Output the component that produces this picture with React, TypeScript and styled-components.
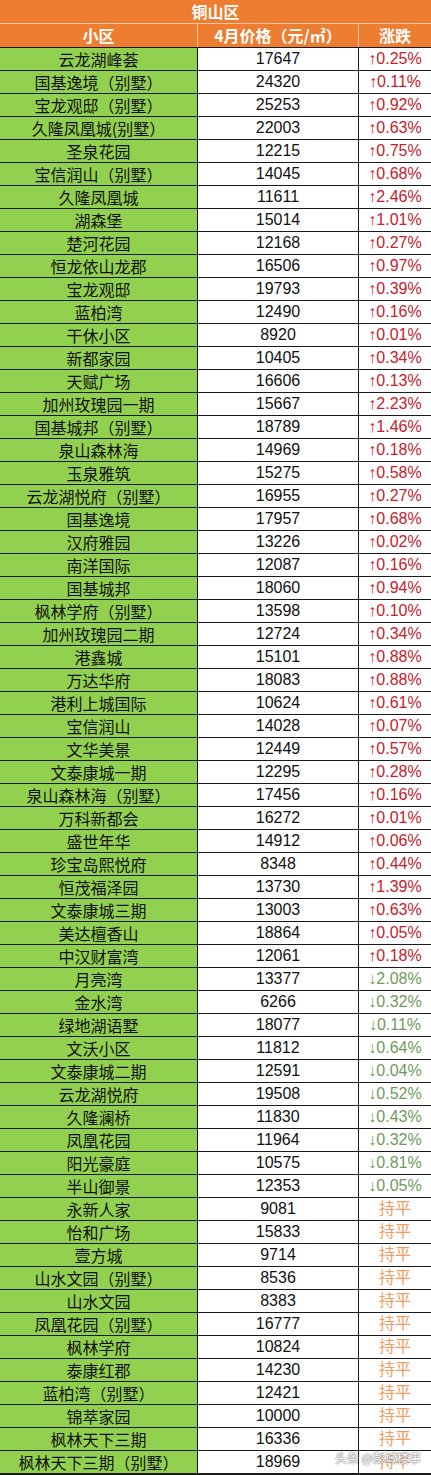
import React from 'react'
import styled, { createGlobalStyle } from 'styled-components'

type Trend = 'up' | 'down' | 'flat'

interface Row {
  name: string
  price: string
  change: string
}

const rows: Row[] = [
  { name: '云龙湖峰荟', price: '17647', change: '↑0.25%' },
  { name: '国基逸境（别墅）', price: '24320', change: '↑0.11%' },
  { name: '宝龙观邸（别墅）', price: '25253', change: '↑0.92%' },
  { name: '久隆凤凰城(别墅）', price: '22003', change: '↑0.63%' },
  { name: '圣泉花园', price: '12215', change: '↑0.75%' },
  { name: '宝信润山（别墅）', price: '14045', change: '↑0.68%' },
  { name: '久隆凤凰城', price: '11611', change: '↑2.46%' },
  { name: '湖森堡', price: '15014', change: '↑1.01%' },
  { name: '楚河花园', price: '12168', change: '↑0.27%' },
  { name: '恒龙依山龙郡', price: '16506', change: '↑0.97%' },
  { name: '宝龙观邸', price: '19793', change: '↑0.39%' },
  { name: '蓝柏湾', price: '12490', change: '↑0.16%' },
  { name: '干休小区', price: '8920', change: '↑0.01%' },
  { name: '新都家园', price: '10405', change: '↑0.34%' },
  { name: '天赋广场', price: '16606', change: '↑0.13%' },
  { name: '加州玫瑰园一期', price: '15667', change: '↑2.23%' },
  { name: '国基城邦（别墅）', price: '18789', change: '↑1.46%' },
  { name: '泉山森林海', price: '14969', change: '↑0.18%' },
  { name: '玉泉雅筑', price: '15275', change: '↑0.58%' },
  { name: '云龙湖悦府（别墅）', price: '16955', change: '↑0.27%' },
  { name: '国基逸境', price: '17957', change: '↑0.68%' },
  { name: '汉府雅园', price: '13226', change: '↑0.02%' },
  { name: '南洋国际', price: '12087', change: '↑0.16%' },
  { name: '国基城邦', price: '18060', change: '↑0.94%' },
  { name: '枫林学府（别墅）', price: '13598', change: '↑0.10%' },
  { name: '加州玫瑰园二期', price: '12724', change: '↑0.34%' },
  { name: '港鑫城', price: '15101', change: '↑0.88%' },
  { name: '万达华府', price: '18083', change: '↑0.88%' },
  { name: '港利上城国际', price: '10624', change: '↑0.61%' },
  { name: '宝信润山', price: '14028', change: '↑0.07%' },
  { name: '文华美景', price: '12449', change: '↑0.57%' },
  { name: '文泰康城一期', price: '12295', change: '↑0.28%' },
  { name: '泉山森林海（别墅）', price: '17456', change: '↑0.16%' },
  { name: '万科新都会', price: '16272', change: '↑0.01%' },
  { name: '盛世年华', price: '14912', change: '↑0.06%' },
  { name: '珍宝岛熙悦府', price: '8348', change: '↑0.44%' },
  { name: '恒茂福泽园', price: '13730', change: '↑1.39%' },
  { name: '文泰康城三期', price: '13003', change: '↑0.63%' },
  { name: '美达檀香山', price: '18864', change: '↑0.05%' },
  { name: '中汉财富湾', price: '12061', change: '↑0.18%' },
  { name: '月亮湾', price: '13377', change: '↓2.08%' },
  { name: '金水湾', price: '6266', change: '↓0.32%' },
  { name: '绿地湖语墅', price: '18077', change: '↓0.11%' },
  { name: '文沃小区', price: '11812', change: '↓0.64%' },
  { name: '文泰康城二期', price: '12591', change: '↓0.04%' },
  { name: '云龙湖悦府', price: '19508', change: '↓0.52%' },
  { name: '久隆澜桥', price: '11830', change: '↓0.43%' },
  { name: '凤凰花园', price: '11964', change: '↓0.32%' },
  { name: '阳光豪庭', price: '10575', change: '↓0.81%' },
  { name: '半山御景', price: '12353', change: '↓0.05%' },
  { name: '永新人家', price: '9081', change: '持平' },
  { name: '怡和广场', price: '15833', change: '持平' },
  { name: '壹方城', price: '9714', change: '持平' },
  { name: '山水文园（别墅）', price: '8536', change: '持平' },
  { name: '山水文园', price: '8383', change: '持平' },
  { name: '凤凰花园（别墅）', price: '16777', change: '持平' },
  { name: '枫林学府', price: '10824', change: '持平' },
  { name: '泰康红郡', price: '14230', change: '持平' },
  { name: '蓝柏湾（别墅）', price: '12421', change: '持平' },
  { name: '锦萃家园', price: '10000', change: '持平' },
  { name: '枫林天下三期', price: '16336', change: '持平' },
  { name: '枫林天下三期（别墅）', price: '18969', change: '持平' },
]

const trendOf = (change: string): Trend =>
  change.startsWith('↑') ? 'up' : change.startsWith('↓') ? 'down' : 'flat'

const App: React.FunctionComponent = () => (
  <>
    <GlobalStyle />
    <Sheet>
      <Title>铜山区</Title>
      <HeaderRow>
        <HeadCell>小区</HeadCell>
        <HeadCell>4月价格（元/㎡）</HeadCell>
        <HeadCell>涨跌</HeadCell>
      </HeaderRow>
      {rows.map((row) => (
        <DataRow key={row.name}>
          <NameCell>{row.name}</NameCell>
          <PriceCell>{row.price}</PriceCell>
          <ChangeCell trend={trendOf(row.change)}>{row.change}</ChangeCell>
        </DataRow>
      ))}
      <Watermark>头条 @彭城楼事</Watermark>
    </Sheet>
  </>
)

export default App

const GlobalStyle = createGlobalStyle`
  html, body {
    margin: 0;
    padding: 0;
    background: #fff;
  }
  body {
    font-family: "Liberation Sans", "Noto Sans CJK SC", sans-serif;
  }
`

const Sheet = styled.div`
  position: relative;
  width: 431px;
  border-bottom: 1px solid #1a1a1a;
`

const Title = styled.div`
  height: 23px;
  border-bottom: 1px solid #f6c6a3;
  background: #ed7d31;
  color: #fff;
  font-family: "Noto Sans CJK SC", sans-serif;
  font-size: 16px;
  font-weight: 700;
  line-height: 23px;
  text-align: center;
`

const HeaderRow = styled.div`
  display: grid;
  grid-template-columns: 197px 160px 72px;
  column-gap: 1px;
  height: 23px;
  background: #f6c6a3;
  border-bottom: 1px solid #1a1a1a;
`

const HeadCell = styled.div`
  background: #ed7d31;
  color: #fff;
  font-family: "Noto Sans CJK SC", sans-serif;
  font-size: 16px;
  font-weight: 700;
  line-height: 23px;
  text-align: center;
  white-space: nowrap;
`

const DataRow = styled.div`
  display: grid;
  grid-template-columns: 197px 160px 72px;
  column-gap: 1px;
  height: 22px;
  background: #1a1a1a;
  border-bottom: 1px solid #1a1a1a;
  &:last-of-type {
    border-bottom: none;
  }
`

const Cell = styled.div`
  font-size: 16px;
  line-height: 22px;
  text-align: center;
  white-space: nowrap;
  overflow: hidden;
`

const NameCell = styled(Cell)`
  background: #92d050;
  color: #111;
  font-family: "Noto Sans CJK SC", sans-serif;
`

const PriceCell = styled(Cell)`
  background: #fff;
  color: #111;
  font-family: "Liberation Sans", sans-serif;
`

const trendColor: Record<Trend, string> = {
  up: '#c8202c',
  down: '#6f9a5c',
  flat: '#f29b62',
}

const ChangeCell = styled(Cell)<{ trend: Trend }>`
  background: #fff;
  color: ${({ trend }) => trendColor[trend]};
  font-family: "Liberation Sans", "Noto Sans CJK SC", sans-serif;
`

const Watermark = styled.div`
  position: absolute;
  right: 10px;
  bottom: 9px;
  color: #fff;
  font-family: "Noto Sans CJK SC", sans-serif;
  font-size: 12px;
  line-height: 14px;
  text-shadow: 0 0 1px #555, 0 0 2px #777;
  opacity: 0.9;
`
